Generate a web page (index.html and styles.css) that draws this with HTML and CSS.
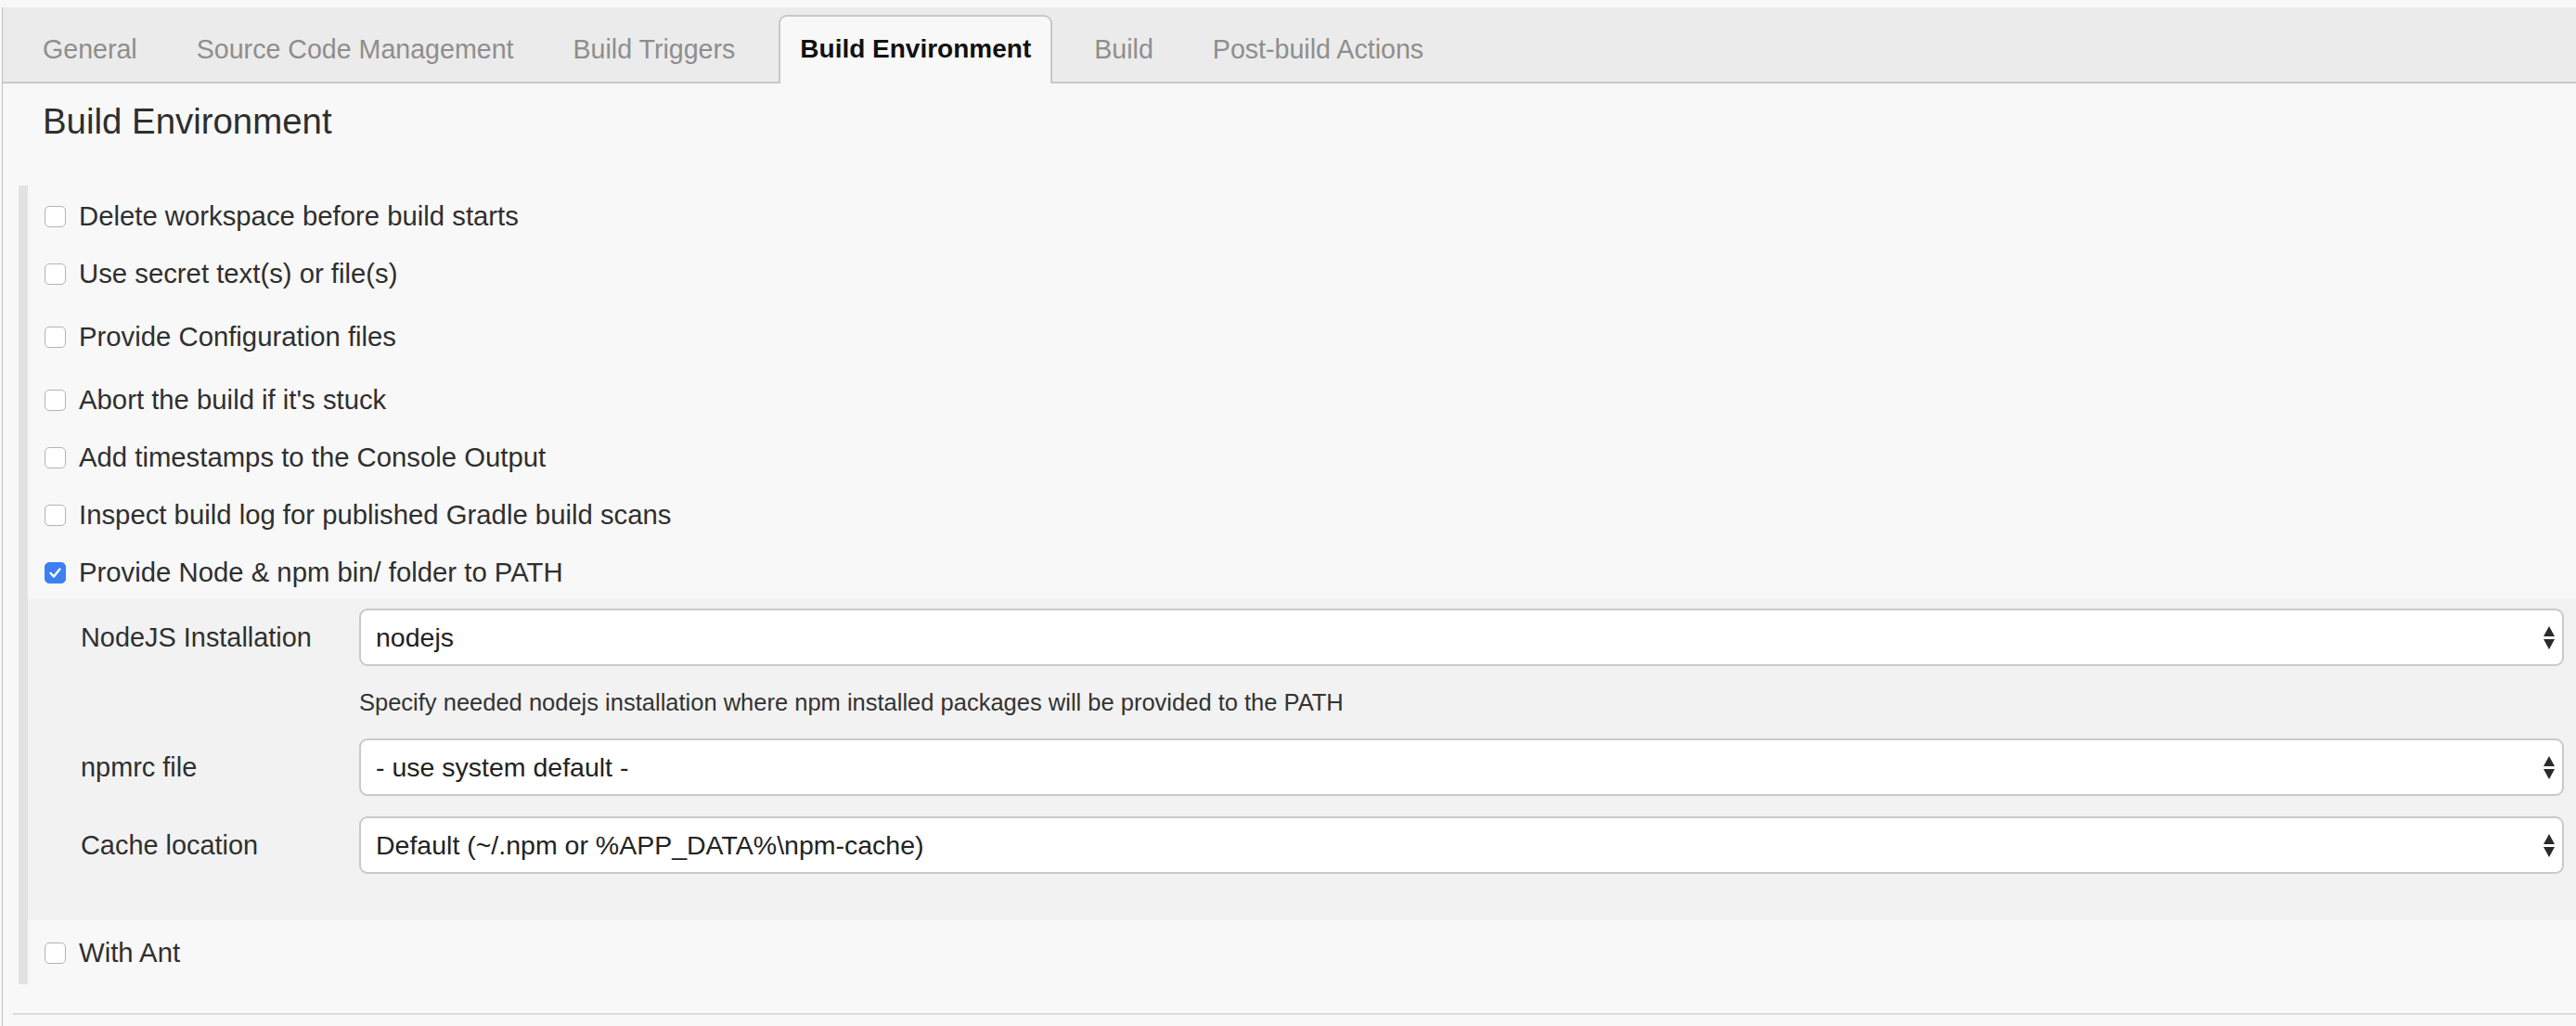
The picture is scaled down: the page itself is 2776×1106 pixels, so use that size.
FILE: index.html
```html
<!DOCTYPE html>
<html lang="en">
<head>
<meta charset="utf-8">
<title>Build Environment</title>
<link rel="stylesheet" href="styles.css">
</head>
<body>
<div class="frame">
  <nav class="tabs">
    <div class="tab">General</div>
    <div class="tab">Source Code Management</div>
    <div class="tab">Build Triggers</div>
    <div class="tab active">Build Environment</div>
    <div class="tab">Build</div>
    <div class="tab">Post-build Actions</div>
  </nav>

  <h2 class="section-title">Build Environment</h2>

  <div class="options">
    <label class="opt"><span class="cb"></span>Delete workspace before build starts</label>
    <label class="opt"><span class="cb"></span>Use secret text(s) or file(s)</label>
    <label class="opt opt-wide"><span class="cb"></span>Provide Configuration files</label>
    <label class="opt opt-wide2"><span class="cb"></span>Abort the build if it's stuck</label>
    <label class="opt"><span class="cb"></span>Add timestamps to the Console Output</label>
    <label class="opt"><span class="cb"></span>Inspect build log for published Gradle build scans</label>
    <label class="opt"><span class="cb on"><svg viewBox="0 0 23 23" width="23" height="23"><path d="M6.5 11.8 L10 15.6 L16.4 7.4" fill="none" stroke="#fff" stroke-width="2.4" stroke-linecap="round" stroke-linejoin="round"/></svg></span>Provide Node &amp; npm bin/ folder to PATH</label>

    <div class="nested">
      <div class="field">
        <div class="flabel">NodeJS Installation</div>
        <div class="fctl">
          <div class="select"><span>nodejs</span><svg class="arrows" viewBox="0 0 12 25" width="12" height="25"><path d="M6 0 L12 11 L0 11 Z M0 14 L12 14 L6 25 Z" fill="#2b2b2b"/></svg></div>
          <div class="help">Specify needed nodejs installation where npm installed packages will be provided to the PATH</div>
        </div>
      </div>
      <div class="field field-b">
        <div class="flabel">npmrc file</div>
        <div class="fctl">
          <div class="select"><span>- use system default -</span><svg class="arrows" viewBox="0 0 12 25" width="12" height="25"><path d="M6 0 L12 11 L0 11 Z M0 14 L12 14 L6 25 Z" fill="#2b2b2b"/></svg></div>
        </div>
      </div>
      <div class="field field-c">
        <div class="flabel">Cache location</div>
        <div class="fctl">
          <div class="select"><span>Default (~/.npm or %APP_DATA%\npm-cache)</span><svg class="arrows" viewBox="0 0 12 25" width="12" height="25"><path d="M6 0 L12 11 L0 11 Z M0 14 L12 14 L6 25 Z" fill="#2b2b2b"/></svg></div>
        </div>
      </div>
    </div>

    <label class="opt opt-after"><span class="cb"></span>With Ant</label>
  </div>

  <hr class="sep">
</div>
</body>
</html>
```

FILE: styles.css
```css
html, body {
  margin: 0;
  padding: 0;
}

body {
  padding-top: 8px;
  background: #f8f8f8;
  font-family: "Liberation Sans", Arial, sans-serif;
  color: #333;
  min-height: 100vh;
  box-sizing: border-box;
}

.frame {
  margin-left: 2px;
  border-left: 1px solid #c2c2c2;
  min-height: calc(100vh - 8px);
  box-sizing: border-box;
}

/* Tabs */
.tabs {
  display: flex;
  align-items: flex-end;
  gap: 22px;
  height: 80px;
  padding-left: 22px;
  background: #ebebeb;
  border-bottom: 2px solid #c8c8c8;
}

.tab {
  box-sizing: border-box;
  height: 74px;
  margin-bottom: -2px;
  padding: 0 19px;
  border: 2px solid transparent;
  border-bottom: 0;
  line-height: 70px;
  font-size: 28.6px;
  color: #8e8e8e;
  white-space: nowrap;
}

.tab.active {
  background: #f8f8f8;
  border-color: #c8c8c8;
  border-radius: 9px 9px 0 0;
  font-weight: bold;
  font-size: 28px;
  color: #111;
  padding: 0 21px;
  margin-left: 4px;
  margin-right: 2px;
}

/* Section heading */
.section-title {
  margin: 19px 0 0 43px;
  font-size: 38.4px;
  font-weight: normal;
  line-height: 44px;
  color: #2e2e2e;
}

/* Option list */
.options {
  margin: 47px 0 0 17px;
  border-left: 10px solid #e2e2e2;
  padding: 16px 0 17px 0;
}

.opt {
  display: flex;
  align-items: center;
  gap: 14px;
  height: 34px;
  padding-left: 18px;
  font-size: 29.3px;
  line-height: 34px;
  color: #2f2f2f;
  white-space: nowrap;
}

.opt + .opt {
  margin-top: 28px;
}

.opt.opt-wide {
  margin-top: 34px;
}

.opt.opt-wide2 {
  margin-top: 34px;
}

.opt.opt-after {
  margin-top: 18px;
}

.cb {
  flex-shrink: 0;
  box-sizing: border-box;
  width: 23px;
  height: 23px;
  border: 1.5px solid #b3b3b3;
  border-radius: 5px;
  background: #fff;
  display: flex;
  align-items: center;
  justify-content: center;
}

.cb.on {
  background: #3c80f2;
  border-color: #3c80f2;
}

.cb svg {
  display: block;
  margin: -1.5px;
}

/* Nested block */
.nested {
  margin-top: 11px;
  background: #f2f2f2;
  padding: 11px 13px 50px 57px;
}

.field {
  display: grid;
  grid-template-columns: 300px 1fr;
}

.field-b {
  margin-top: 24px;
}

.field-c {
  margin-top: 22px;
}

.flabel {
  padding-top: 14px;
  font-size: 28.9px;
  line-height: 34px;
  color: #2f2f2f;
  white-space: nowrap;
}

.select {
  box-sizing: border-box;
  height: 62px;
  border: 2px solid #c9c9c9;
  border-radius: 9px;
  background: #fff;
  padding: 0 8px 0 16px;
  display: flex;
  align-items: center;
  justify-content: space-between;
  font-size: 28.5px;
  color: #222;
  white-space: nowrap;
}

.arrows {
  display: block;
  flex-shrink: 0;
}

.help {
  margin-top: 24px;
  font-size: 25.5px;
  line-height: 30px;
  color: #333;
  white-space: nowrap;
}

.sep {
  margin: 31px 0 0 11px;
  border: 0;
  border-top: 2px solid #dcdcdc;
  height: 0;
}
```
